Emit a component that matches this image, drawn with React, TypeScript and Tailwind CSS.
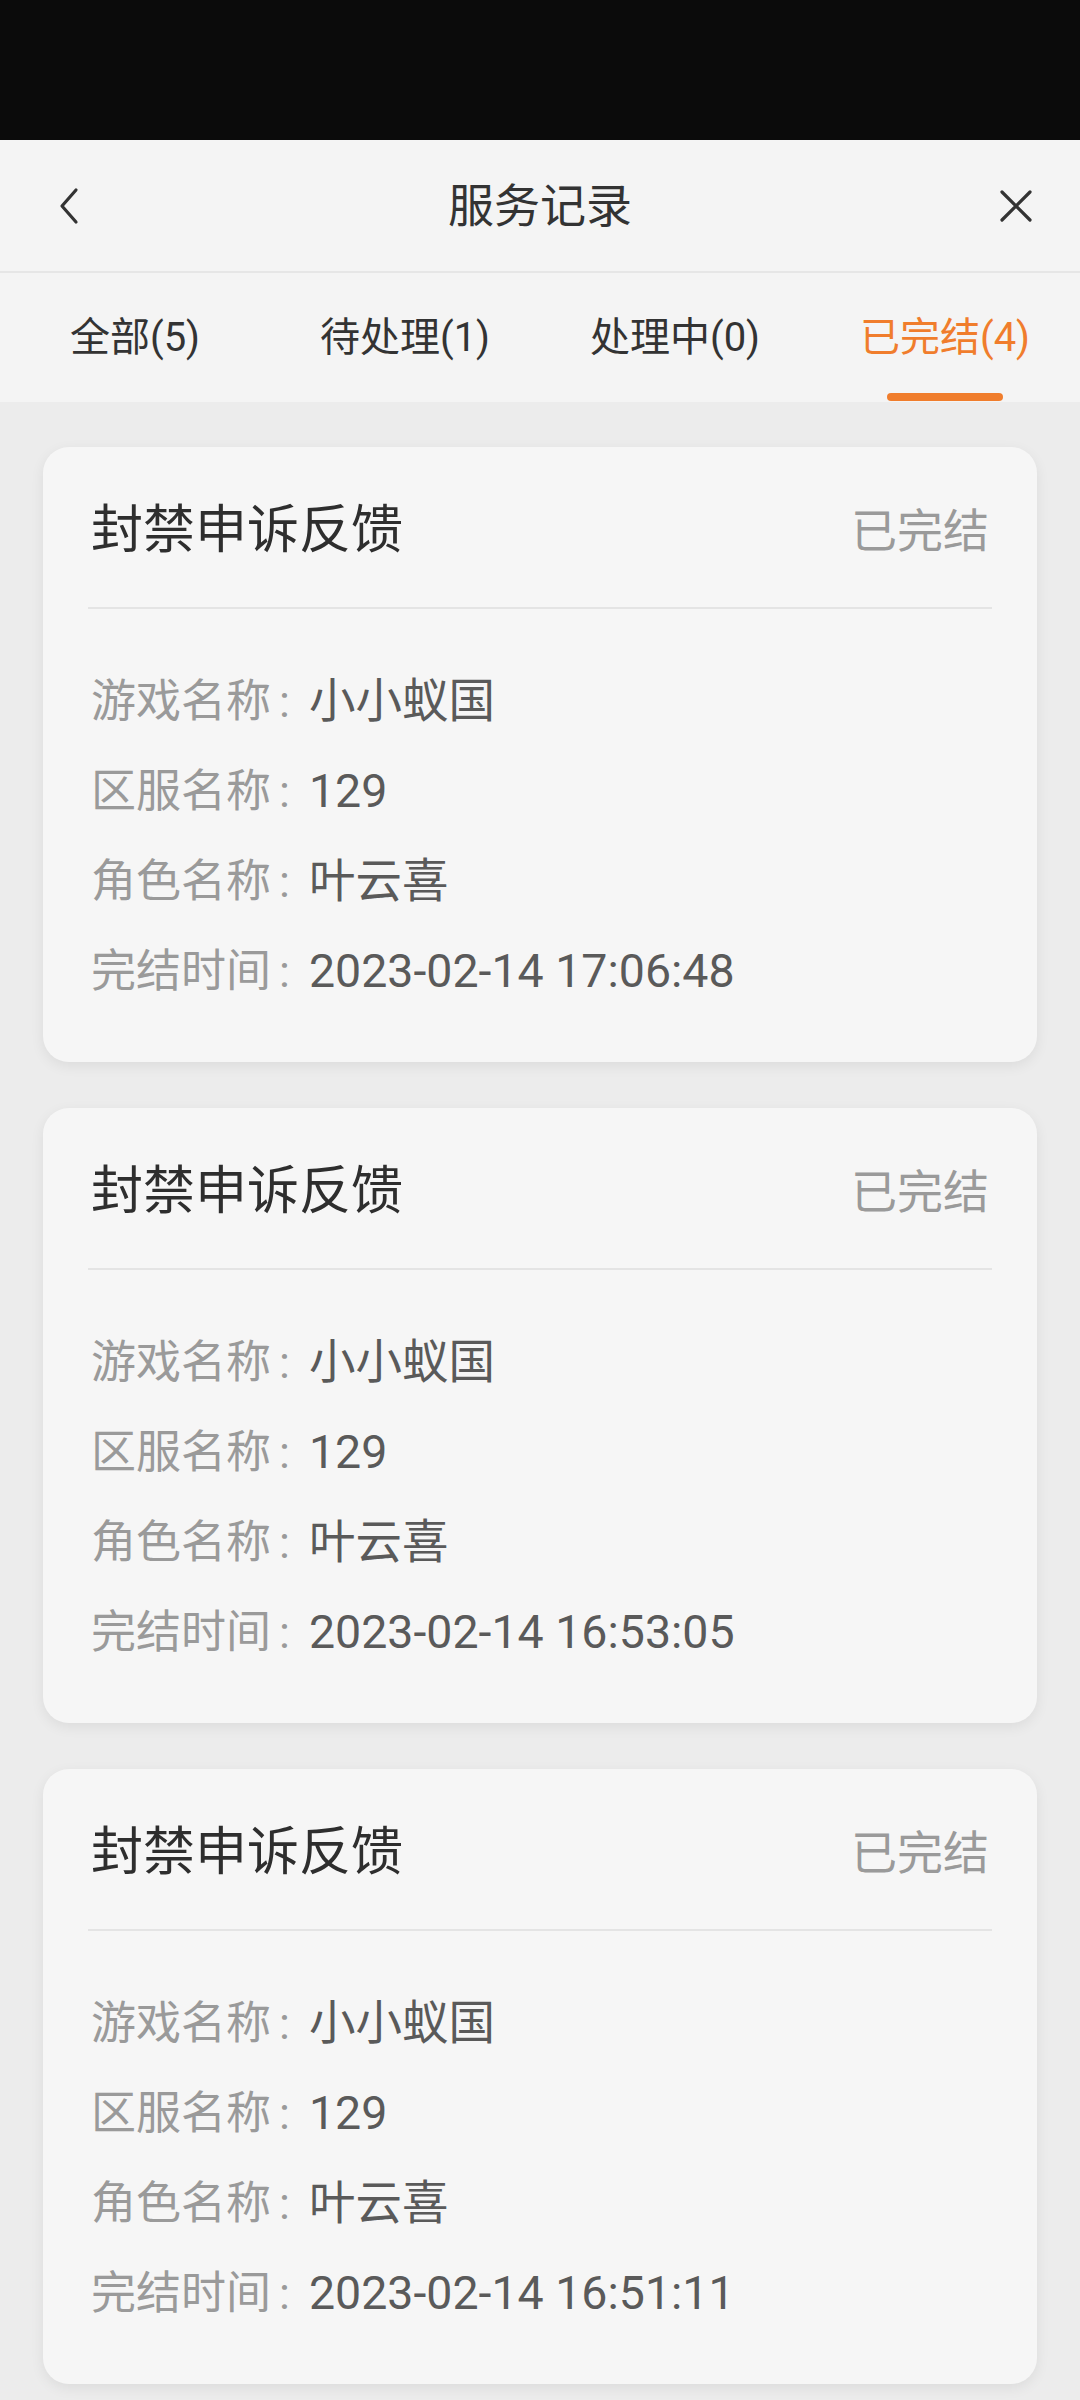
import React from 'react';

type Record = {
  title: string;
  status: string;
  game: string;
  server: string;
  role: string;
  finishedAt: string;
};

const RECORDS: Record[] = [
  { title: '封禁申诉反馈', status: '已完结', game: '小小蚁国', server: '129', role: '叶云喜', finishedAt: '2023-02-14 17:06:48' },
  { title: '封禁申诉反馈', status: '已完结', game: '小小蚁国', server: '129', role: '叶云喜', finishedAt: '2023-02-14 16:53:05' },
  { title: '封禁申诉反馈', status: '已完结', game: '小小蚁国', server: '129', role: '叶云喜', finishedAt: '2023-02-14 16:51:11' },
];

const TABS = ['全部(5)', '待处理(1)', '处理中(0)', '已完结(4)'];
const ACTIVE_TAB = 3;

const Row: React.FC<{ label: string; value: string }> = ({ label, value }) => (
  <div className="flex items-center h-[90px] leading-none">
    <span className="text-[45px] text-[#9a9a9a]">{label}</span>
    <span className="text-[45px] text-[#9a9a9a] ml-[8px] mr-[19px]">:</span>
    <span className="text-[46.5px] text-[#5a5a5a]">{value}</span>
  </div>
);

const RecordCard: React.FC<{ item: Record }> = ({ item }) => (
  <div className="rounded-[26px] bg-[#f6f6f6] px-[48px] shadow-[0_4px_14px_rgba(0,0,0,0.07)]">
    {/* Header */}
    <div className="flex items-center justify-between h-[160px] pt-[8px]">
      <span className="text-[52px] leading-none text-[#2e2e2e]">{item.title}</span>
      <span className="text-[46px] leading-none text-[#9a9a9a]">{item.status}</span>
    </div>
    <div className="h-[2px] bg-[#e4e4e4] -mx-[3px]" />
    {/* Details */}
    <div className="pt-[47px] pb-[46px]">
      <Row label="游戏名称" value={item.game} />
      <Row label="区服名称" value={item.server} />
      <Row label="角色名称" value={item.role} />
      <Row label="完结时间" value={item.finishedAt} />
    </div>
  </div>
);

export default function App() {
  return (
    <div className="w-[1080px] min-h-[2400px] bg-[#ececec] font-['Roboto','Noto_Sans_CJK_SC',sans-serif]">
      {/* Status bar */}
      <div className="h-[140px] bg-[#0b0b0b]" />

      {/* Nav bar */}
      <div className="relative flex items-center justify-between h-[133px] px-[52px] bg-[#f4f4f4] border-b-2 border-[#e6e6e6]">
        <svg width="30" height="40" viewBox="0 0 30 40" fill="none" className="ml-[2px]">
          <path d="M22 4 L8 20 L22 36" stroke="#333" strokeWidth="3.2" strokeLinecap="round" strokeLinejoin="round" />
        </svg>
        <span className="absolute left-1/2 -translate-x-1/2 text-[46px] leading-none text-[#333]">服务记录</span>
        <svg width="34" height="34" viewBox="0 0 34 34" fill="none" className="mr-[-5px]">
          <path d="M3 3 L31 31 M31 3 L3 31" stroke="#333" strokeWidth="3.2" strokeLinecap="round" />
        </svg>
      </div>

      {/* Tabs */}
      <div className="grid grid-cols-4 h-[129px] bg-[#f4f4f4]">
        {TABS.map((t, i) => (
          <div key={t} className="relative flex items-center justify-center">
            <span className={`text-[40px] leading-none ${i === ACTIVE_TAB ? 'text-[#f07d2c]' : 'text-[#333]'}`}>{t}</span>
            {i === ACTIVE_TAB && (
              <span className="absolute bottom-[1px] left-1/2 -translate-x-1/2 w-[116px] h-[8px] rounded-full bg-[#f07d2c]" />
            )}
          </div>
        ))}
      </div>

      {/* List */}
      <div className="flex flex-col gap-[46px] px-[43px] pt-[45px] pb-[20px]">
        {RECORDS.map((r, i) => (
          <RecordCard key={i} item={r} />
        ))}
      </div>
    </div>
  );
}
